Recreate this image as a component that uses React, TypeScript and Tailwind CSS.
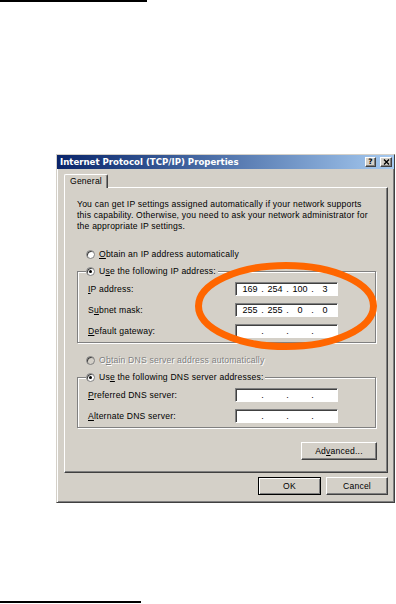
import React from "react";

const raisedBtn =
  "bg-[#d4d0c8] border border-t-white border-l-white border-r-[#404040] border-b-[#404040] shadow-[inset_-1px_-1px_0_#808080]";

function Radio({ checked, disabled }: { checked?: boolean; disabled?: boolean }) {
  return (
    <span
      className={`flex w-[9px] h-[9px] shrink-0 items-center justify-center rounded-full border border-[#808080] shadow-[inset_1px_1px_0_#404040] ${
        disabled ? "bg-[#d4d0c8]" : "bg-white"
      }`}
    >
      {checked && <span className="block w-[3px] h-[3px] rounded-full bg-black" />}
    </span>
  );
}

function IPField({ v }: { v?: string[] }) {
  return (
    <div className="flex w-[103px] h-[14px] shrink-0 items-center bg-white border border-t-[#808080] border-l-[#808080] border-b-white border-r-white shadow-[inset_1px_1px_0_#404040] pl-[3px] text-[9px] leading-none tracking-normal text-black">
      {[0, 1, 2, 3].map((i) => (
        <React.Fragment key={i}>
          <span className="w-[22px] text-center">{v ? v[i] : ""}</span>
          {i < 3 && <span className="w-[3px] text-center">.</span>}
        </React.Fragment>
      ))}
    </div>
  );
}

function Row({ label, v }: { label: React.ReactNode; v?: string[] }) {
  return (
    <div className="flex h-[14px] items-center justify-between">
      <span className="whitespace-nowrap">{label}</span>
      <IPField v={v} />
    </div>
  );
}

export default function App() {
  return (
    <div className="relative w-[396px] h-[604px] overflow-hidden bg-white font-['Liberation_Sans',Arial,sans-serif] text-[8.6px] tracking-[0.2px] text-black">
      <div className="h-[2px] w-[147px] bg-black" />

      <div className="ml-[56px] mt-[152px] flex h-[349px] w-[339px] flex-col bg-[#d4d0c8] border border-t-[#d4d0c8] border-l-[#d4d0c8] border-r-[#404040] border-b-[#404040] shadow-[inset_1px_1px_0_#fff,inset_-1px_-1px_0_#808080]">
        {/* title bar */}
        <div className="flex h-[14px] items-center justify-between bg-gradient-to-r from-[#0a246a] to-[#a6caf0] pl-[3px] pr-[2px]">
          <span className="font-['DejaVu_Sans',sans-serif] text-[8.6px] font-bold leading-none tracking-normal text-white whitespace-nowrap">
            Internet Protocol (TCP/IP) Properties
          </span>
          <div className="flex items-center gap-[4px]">
            <div className={`flex h-[10px] w-[11px] items-center justify-center ${raisedBtn}`}>
              <span className="font-['DejaVu_Sans',sans-serif] text-[7.5px] font-bold leading-none tracking-normal">?</span>
            </div>
            <div className={`flex h-[10px] w-[12px] items-center justify-center ${raisedBtn}`}>
              <svg width="7" height="6" viewBox="0 0 7 6">
                <path d="M1 0.5 L6 5.5 M6 0.5 L1 5.5" stroke="#000" strokeWidth="1.4" />
              </svg>
            </div>
          </div>
        </div>

        {/* body */}
        <div className="flex flex-col pl-[7px] pr-[6px] pt-[5px]">
          <div className="relative z-10 -mb-[1px] flex h-[14px] w-[44px] items-center justify-center rounded-t-[2px] bg-[#d4d0c8] border-t border-l border-r border-t-white border-l-white border-r-[#404040] shadow-[inset_-1px_0_0_#808080]">
            <span className="text-[8.6px] leading-none">General</span>
          </div>

          <div className="flex flex-col bg-[#d4d0c8] border border-t-white border-l-white border-r-[#404040] border-b-[#404040] shadow-[inset_-1px_-1px_0_#808080] pt-[11px] pl-[12px] pr-[11px] pb-[12px]">
            <p className="whitespace-nowrap leading-[11px]">
              You can get IP settings assigned automatically if your network supports
              <br />
              this capability. Otherwise, you need to ask your network administrator for
              <br />
              the appropriate IP settings.
            </p>

            <div className="mt-[16px] flex h-[12px] items-center gap-[4px] pl-[9px]">
              <Radio />
              <span>
                <span className="underline">O</span>btain an IP address automatically
              </span>
            </div>

            <div className="relative mt-[11px] flex flex-col gap-[7px] border border-[#808080] shadow-[1px_1px_0_#fff,inset_1px_1px_0_#fff] pt-[10px] pb-[4px] pl-[10px] pr-[37px]">
              <div className="absolute left-[8px] top-[-7px] flex h-[12px] items-center gap-[4px] bg-[#d4d0c8] pr-[2px]">
                <Radio checked />
                <span className="whitespace-nowrap">
                  U<span className="underline">s</span>e the following IP address:
                </span>
              </div>
              <Row label={<><span className="underline">I</span>P address:</>} v={["169", "254", "100", "3"]} />
              <Row label={<>S<span className="underline">u</span>bnet mask:</>} v={["255", "255", "0", "0"]} />
              <Row label={<><span className="underline">D</span>efault gateway:</>} />
            </div>

            <div className="mt-[11px] flex h-[12px] items-center gap-[4px] pl-[9px]">
              <Radio disabled />
              <span className="text-[#808080] [text-shadow:1px_1px_0_#fff]">
                O<span className="underline">b</span>tain DNS server address automatically
              </span>
            </div>

            <div className="relative mt-[11px] flex flex-col gap-[7px] border border-[#808080] shadow-[1px_1px_0_#fff,inset_1px_1px_0_#fff] pt-[10px] pb-[4px] pl-[10px] pr-[37px]">
              <div className="absolute left-[8px] top-[-7px] flex h-[12px] items-center gap-[4px] bg-[#d4d0c8] pr-[2px]">
                <Radio checked />
                <span className="whitespace-nowrap">
                  Us<span className="underline">e</span> the following DNS server addresses:
                </span>
              </div>
              <Row label={<><span className="underline">P</span>referred DNS server:</>} />
              <Row label={<><span className="underline">A</span>lternate DNS server:</>} />
            </div>

            <div className={`mt-[14px] -mr-[1px] flex h-[18px] w-[76px] items-center justify-center self-end ${raisedBtn}`}>
              <span>
                Ad<span className="underline">v</span>anced...
              </span>
            </div>
          </div>

          <div className="mt-[4px] flex justify-end gap-[5px]">
            <div className="flex h-[18px] w-[63px] items-center justify-center bg-[#d4d0c8] border border-black shadow-[inset_1px_1px_0_#fff,inset_-1px_-1px_0_#808080]">
              OK
            </div>
            <div className={`flex h-[18px] w-[62px] items-center justify-center ${raisedBtn}`}>Cancel</div>
          </div>
        </div>
      </div>

      <div className="mt-[98px] h-[2px] w-[141px] bg-black" />

      <svg className="pointer-events-none absolute left-0 top-0" width="396" height="604" viewBox="0 0 396 604">
        <ellipse cx="286" cy="306" rx="87.5" ry="40.5" fill="none" stroke="#ff6600" strokeWidth="7" />
      </svg>
    </div>
  );
}
